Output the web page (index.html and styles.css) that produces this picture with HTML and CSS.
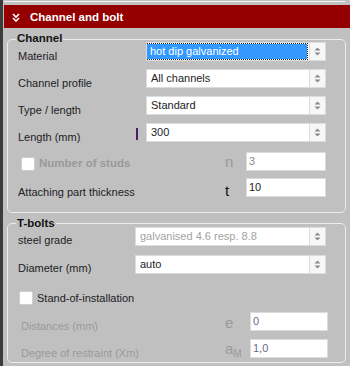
FILE: index.html
```html
<!DOCTYPE html>
<html lang="en">
<head>
  <meta charset="UTF-8">
  <title>Channel and bolt</title>
  <link rel="stylesheet" href="styles.css">
</head>
<body>
  <div class="panel">
    <div class="topline"></div>

    <div class="header">
      <svg class="chevron" width="8" height="9" viewBox="0 0 8 9">
        <polyline points="1,1 4,4 7,1" />
        <polyline points="1,5 4,8 7,5" />
      </svg>
      <span>Channel and bolt</span>
    </div>

    <!-- Channel -->
    <section class="group group-channel">
      <div class="group-title">Channel</div>

      <div class="row">
        <label class="lbl">Material</label>
        <div class="select focused">
          <span class="sel-text"><span class="hl">hot dip galvanized</span></span>
          <span class="spin"><svg width="7" height="9" viewBox="0 0 7 9"><polygon points="0.5,3.5 3.5,0.5 6.5,3.5" /><polygon points="0.5,5.5 3.5,8.5 6.5,5.5" /></svg></span>
        </div>
      </div>

      <div class="row gap8">
        <label class="lbl">Channel profile</label>
        <div class="select">
          <span class="sel-text">All channels</span>
          <span class="spin"><svg width="7" height="9" viewBox="0 0 7 9"><polygon points="0.5,3.5 3.5,0.5 6.5,3.5" /><polygon points="0.5,5.5 3.5,8.5 6.5,5.5" /></svg></span>
        </div>
      </div>

      <div class="row gap8">
        <label class="lbl">Type / length</label>
        <div class="select">
          <span class="sel-text">Standard</span>
          <span class="spin"><svg width="7" height="9" viewBox="0 0 7 9"><polygon points="0.5,3.5 3.5,0.5 6.5,3.5" /><polygon points="0.5,5.5 3.5,8.5 6.5,5.5" /></svg></span>
        </div>
      </div>

      <div class="row gap8">
        <label class="lbl lbl-short">Length (mm)</label>
        <span class="marker"></span>
        <div class="select">
          <span class="sel-text">300</span>
          <span class="spin"><svg width="7" height="9" viewBox="0 0 7 9"><polygon points="0.5,3.5 3.5,0.5 6.5,3.5" /><polygon points="0.5,5.5 3.5,8.5 6.5,5.5" /></svg></span>
        </div>
      </div>

      <div class="row row-studs">
        <span class="check check-studs"></span>
        <span class="check-label disabled bold">Number of studs</span>
        <span class="sym sym-n disabled">n</span>
        <div class="field field-grey">3</div>
      </div>

      <div class="row row-thick">
        <label class="lbl">Attaching part thickness</label>
        <span class="sym sym-t">t</span>
        <div class="field">10</div>
      </div>
    </section>

    <!-- T-bolts -->
    <section class="group group-bolts">
      <div class="group-title">T-bolts</div>

      <div class="row">
        <label class="lbl lbl-narrow">steel grade</label>
        <div class="select select-wide is-disabled">
          <span class="sel-text">galvanised 4.6 resp. 8.8</span>
          <span class="spin"><svg width="7" height="9" viewBox="0 0 7 9"><polygon points="0.5,3.5 3.5,0.5 6.5,3.5" /><polygon points="0.5,5.5 3.5,8.5 6.5,5.5" /></svg></span>
        </div>
      </div>

      <div class="row gap9">
        <label class="lbl lbl-narrow">Diameter (mm)</label>
        <div class="select select-wide">
          <span class="sel-text">auto</span>
          <span class="spin"><svg width="7" height="9" viewBox="0 0 7 9"><polygon points="0.5,3.5 3.5,0.5 6.5,3.5" /><polygon points="0.5,5.5 3.5,8.5 6.5,5.5" /></svg></span>
        </div>
      </div>

      <div class="row row-stand">
        <span class="check check-stand"></span>
        <span class="check-label">Stand-of-installation</span>
      </div>

      <div class="row row-dist row-dist-first">
        <label class="lbl disabled indent">Distances (mm)</label>
        <span class="sym sym-e disabled">e</span>
        <div class="field field-blue field-wide">0</div>
      </div>

      <div class="row gap8 row-dist">
        <label class="lbl disabled indent">Degree of restraint (Xm)</label>
        <span class="sym sym-a disabled">a<sub>M</sub></span>
        <div class="field field-blue field-wide">1,0</div>
      </div>
    </section>
  </div>
</body>
</html>
```

FILE: styles.css
```css
/* styles.css */
body {
  margin: 0;
  font-family: "Liberation Sans", Arial, sans-serif;
  font-size: 11px;
  color: #1c1c24;
}

.panel {
  width: 350px;
  height: 366px;
  box-sizing: border-box;
  background: #c0c0c0;
  border-left: 3px solid #3c3c3c;
  overflow: hidden;
}

.topline {
  height: 1px;
  margin: 1px 5px 3px 1px;
  background: #f2f2f2;
}

.header {
  display: flex;
  align-items: center;
  height: 23px;
  margin-left: 1px;
  background: #940000;
  color: #fff;
  font-weight: bold;
  font-size: 11.5px;
}

.chevron {
  margin: 1px 10px 0 8px;
  fill: none;
  stroke: #fff;
  stroke-width: 1.6;
}

.group {
  position: relative;
  width: 339px;
  box-sizing: border-box;
  margin-left: 4px;
  border: 1px solid #ececec;
  border-radius: 5px;
  padding: 2px 19px 15px 10px;
}

.group-channel {
  margin-top: 11px;
}

.group-bolts {
  margin-top: 10px;
  padding-top: 3px;
  padding-bottom: 4px;
}

.group-title {
  position: absolute;
  top: -9px;
  left: 8px;
  padding: 0 1px;
  line-height: 14px;
  font-size: 11.5px;
  font-weight: bold;
  color: #141414;
  background: #c0c0c0;
}

.group-bolts .group-title {
  top: -8px;
}

.row {
  display: flex;
  align-items: flex-start;
  height: 19px;
}

.gap8 { margin-top: 8px; }
.gap9 { margin-top: 9px; }

.lbl {
  width: 128px;
  flex-shrink: 0;
  padding-top: 8px;
  line-height: 13px;
  white-space: nowrap;
}

.lbl-short { width: 118px; }
.lbl-narrow { width: 117px; padding-top: 7px; }
.indent { margin-left: 3px; }

.disabled { color: #9a9a9a; }
.bold { font-weight: bold; font-size: 11.5px; }

.marker {
  width: 2px;
  height: 12px;
  margin: 5px 8px 0 0;
  background: #4a1f5e;
}

.select {
  display: flex;
  width: 180px;
  height: 19px;
  box-sizing: border-box;
  border: 1px solid #dcdcdc;
  background: #fff;
}

.select-wide { width: 191px; }

.sel-text {
  flex: 1;
  padding-left: 4px;
  line-height: 17px;
  white-space: nowrap;
  overflow: hidden;
}

.is-disabled .sel-text { color: #a2a2a2; }

.focused .sel-text {
  padding: 1px 2px 1px 0;
}

.hl {
  display: block;
  height: 15px;
  line-height: 15px;
  padding-left: 3px;
  background: #3399ff;
  color: #fff;
  outline: 1px dotted #222;
}

.spin {
  display: flex;
  align-items: center;
  justify-content: center;
  width: 15px;
  border-left: 1px solid #dcdcdc;
  background: #f7f7f7;
}

.spin svg { fill: #8a8a8a; }

.row-studs { margin-top: 10px; }
.row-thick { margin-top: 7px; }
.row-stand { margin-top: 14px; }
.row-dist { margin-right: -2px; }
.row-dist-first { margin-top: 5px; }

.check {
  width: 14px;
  height: 14px;
  box-sizing: border-box;
  border: 1px solid #cfcfcf;
  border-radius: 2px;
  background: #fff;
  flex-shrink: 0;
}

.check-studs { margin: 5px 0 0 3px; }
.check-stand { margin: 3px 0 0 1px; }

.check-label {
  margin-left: 4px;
  padding-top: 5px;
  line-height: 13px;
}

.check-stand + .check-label {
  margin-left: 4px;
  padding-top: 4px;
}

.sym {
  width: 21px;
  margin-left: auto;
  font-size: 15px;
  line-height: 19px;
}

.sym-t { color: #141414; padding-top: 3px; }
.sym-n { padding-top: 0; }
.sym-e { width: 25px; padding-top: 1px; }
.sym-a { width: 25px; }

.sym sub {
  font-size: 10px;
  vertical-align: -3px;
}

.field {
  width: 80px;
  height: 19px;
  box-sizing: border-box;
  border: 1px solid #dcdcdc;
  background: #fff;
  padding-left: 2px;
  line-height: 17px;
}

.field-wide { width: 78px; }
.field-grey { color: #8a8a8a; }
.field-blue { color: #6a6a90; }
```
